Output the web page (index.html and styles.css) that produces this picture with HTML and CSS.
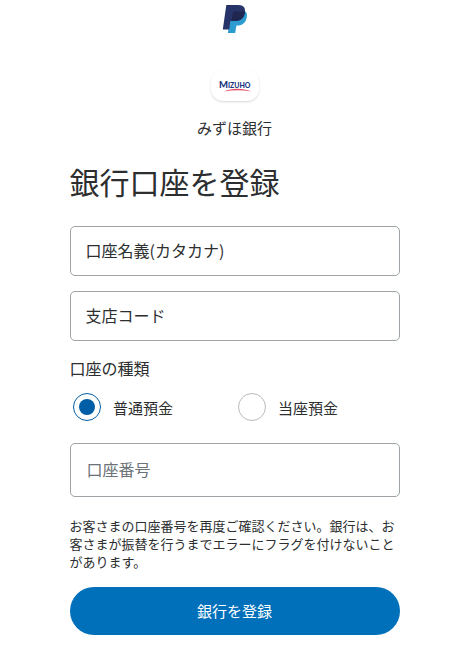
FILE: index.html
```html
<!DOCTYPE html>
<html lang="ja">
<head>
<meta charset="utf-8">
<title>銀行口座を登録</title>
<link rel="stylesheet" href="styles.css">
</head>
<body>
<main class="page">
  <svg class="paypal" viewBox="0 0 26 30" aria-label="PayPal">
    <path fill="#2b9bd0" d="M10 7.500H23.500C25 9 25.300 11 24.800 13.200 23.900 18.400 20.500 21.500 15.800 21.500H14.400L13.200 29H5.800z"/>
    <path fill="#27346a" d="M4.300 1H16.500C21.500 1 23.900 4 22.900 9c-1.100 5.700-4.700 7.900-9.700 7.900H8.400L7.200 25.600H.8z"/>
    <path fill="#1f264f" d="M11 8.300c.1-.6.5-.9 1.100-.9h9.100c.7 0 1.300.1 1.800.3-.9 6.200-4.300 9.200-9.800 9.200H9.500z"/>
  </svg>
  <div class="bank-card">
    <svg class="bank-logo" viewBox="0 0 38 20">
      <text class="bank-word" y="12.500"><tspan x="3" class="initial" textLength="9" lengthAdjust="spacingAndGlyphs">M</tspan><tspan x="12" textLength="22.500" lengthAdjust="spacingAndGlyphs">IZUHO</tspan></text>
      <path fill="#df4960" d="M8 16.400C16 12.900 26 12.900 35.500 16.400 26 14.900 17 14.800 8 16.400z"/>
    </svg>
  </div>
  <p class="bank-name">みずほ銀行</p>
  <form class="form">
    <h1 class="title">銀行口座を登録</h1>
    <div class="field">口座名義(カタカナ)</div>
    <div class="field">支店コード</div>
    <div class="group-label">口座の種類</div>
    <div class="radios">
      <label class="radio"><span class="dot checked"></span><span class="radio-text">普通預金</span></label>
      <label class="radio"><span class="dot"></span><span class="radio-text">当座預金</span></label>
    </div>
    <div class="field tall">口座番号</div>
    <p class="note">お客さまの口座番号を再度ご確認ください。銀行は、お客さまが振替を行うまでエラーにフラグを付けないことがあります。</p>
    <button class="submit" type="button">銀行を登録</button>
  </form>
</main>
</body>
</html>
```
FILE: styles.css
```css
* { box-sizing: border-box; }
body {
  margin: 0;
  background: #fff;
  color: #2c2e2f;
  font-family: "Noto Sans CJK JP", sans-serif;
}
.page {
  display: flex;
  flex-direction: column;
  align-items: center;
  height: 661px;
  padding-top: 4px;
}
.paypal { display: block; width: 26px; height: 30px; }
.bank-card {
  display: flex;
  justify-content: center;
  width: 48px;
  height: 31px;
  margin-top: 36px;
  padding-top: 5px;
  border-radius: 12px;
  background: #fff;
  box-shadow: 0 1px 2px rgba(0, 0, 0, .16);
}
.bank-logo { display: block; width: 38px; height: 20px; }
.bank-word {
  fill: #20347e;
  font-family: Lato, sans-serif;
  font-size: 8px;
  font-weight: 900;
}
.initial { font-size: 9px; }
.bank-name { margin: 16px 0 0; font-size: 15px; line-height: 22px; }
.form { width: 330px; }
.title {
  margin: 23px 0 25px;
  font-size: 30px;
  font-weight: 400;
  line-height: 39px;
}
.field {
  display: flex;
  align-items: center;
  height: 50px;
  margin-bottom: 15px;
  padding: 0 15px 2px;
  border: 1px solid #9da3a6;
  border-radius: 5px;
  font-size: 16px;
  line-height: 24px;
}
.group-label { font-size: 16px; line-height: 24px; }
.radios {
  display: grid;
  grid-template-columns: 1fr 1fr;
  margin-top: 13px;
}
.radio {
  display: flex;
  align-items: center;
  gap: 12.5px;
  height: 28px;
  padding-left: 3px;
  font-size: 15px;
  line-height: 22px;
}
.radio-text { padding-top: 2px; }
.dot {
  display: grid;
  place-items: center;
  width: 28px;
  height: 28px;
  border: 1px solid #b7bcbf;
  border-radius: 50%;
}
.dot.checked { border-color: #005ea6; }
.dot.checked::after {
  content: "";
  width: 16px;
  height: 16px;
  border-radius: 50%;
  background: #005ea6;
}
.tall {
  height: 54px;
  margin: 22px 0 20px;
  padding-left: 16px;
  color: #6c7378;
}
.note { margin: 0; font-size: 13px; line-height: 18px; }
.submit {
  display: block;
  width: 100%;
  height: 48px;
  margin-top: 16px;
  padding: 0 0 2px;
  border: 0;
  border-radius: 24px;
  background: #0070ba;
  color: #fff;
  font-family: inherit;
  font-size: 15px;
}
```
